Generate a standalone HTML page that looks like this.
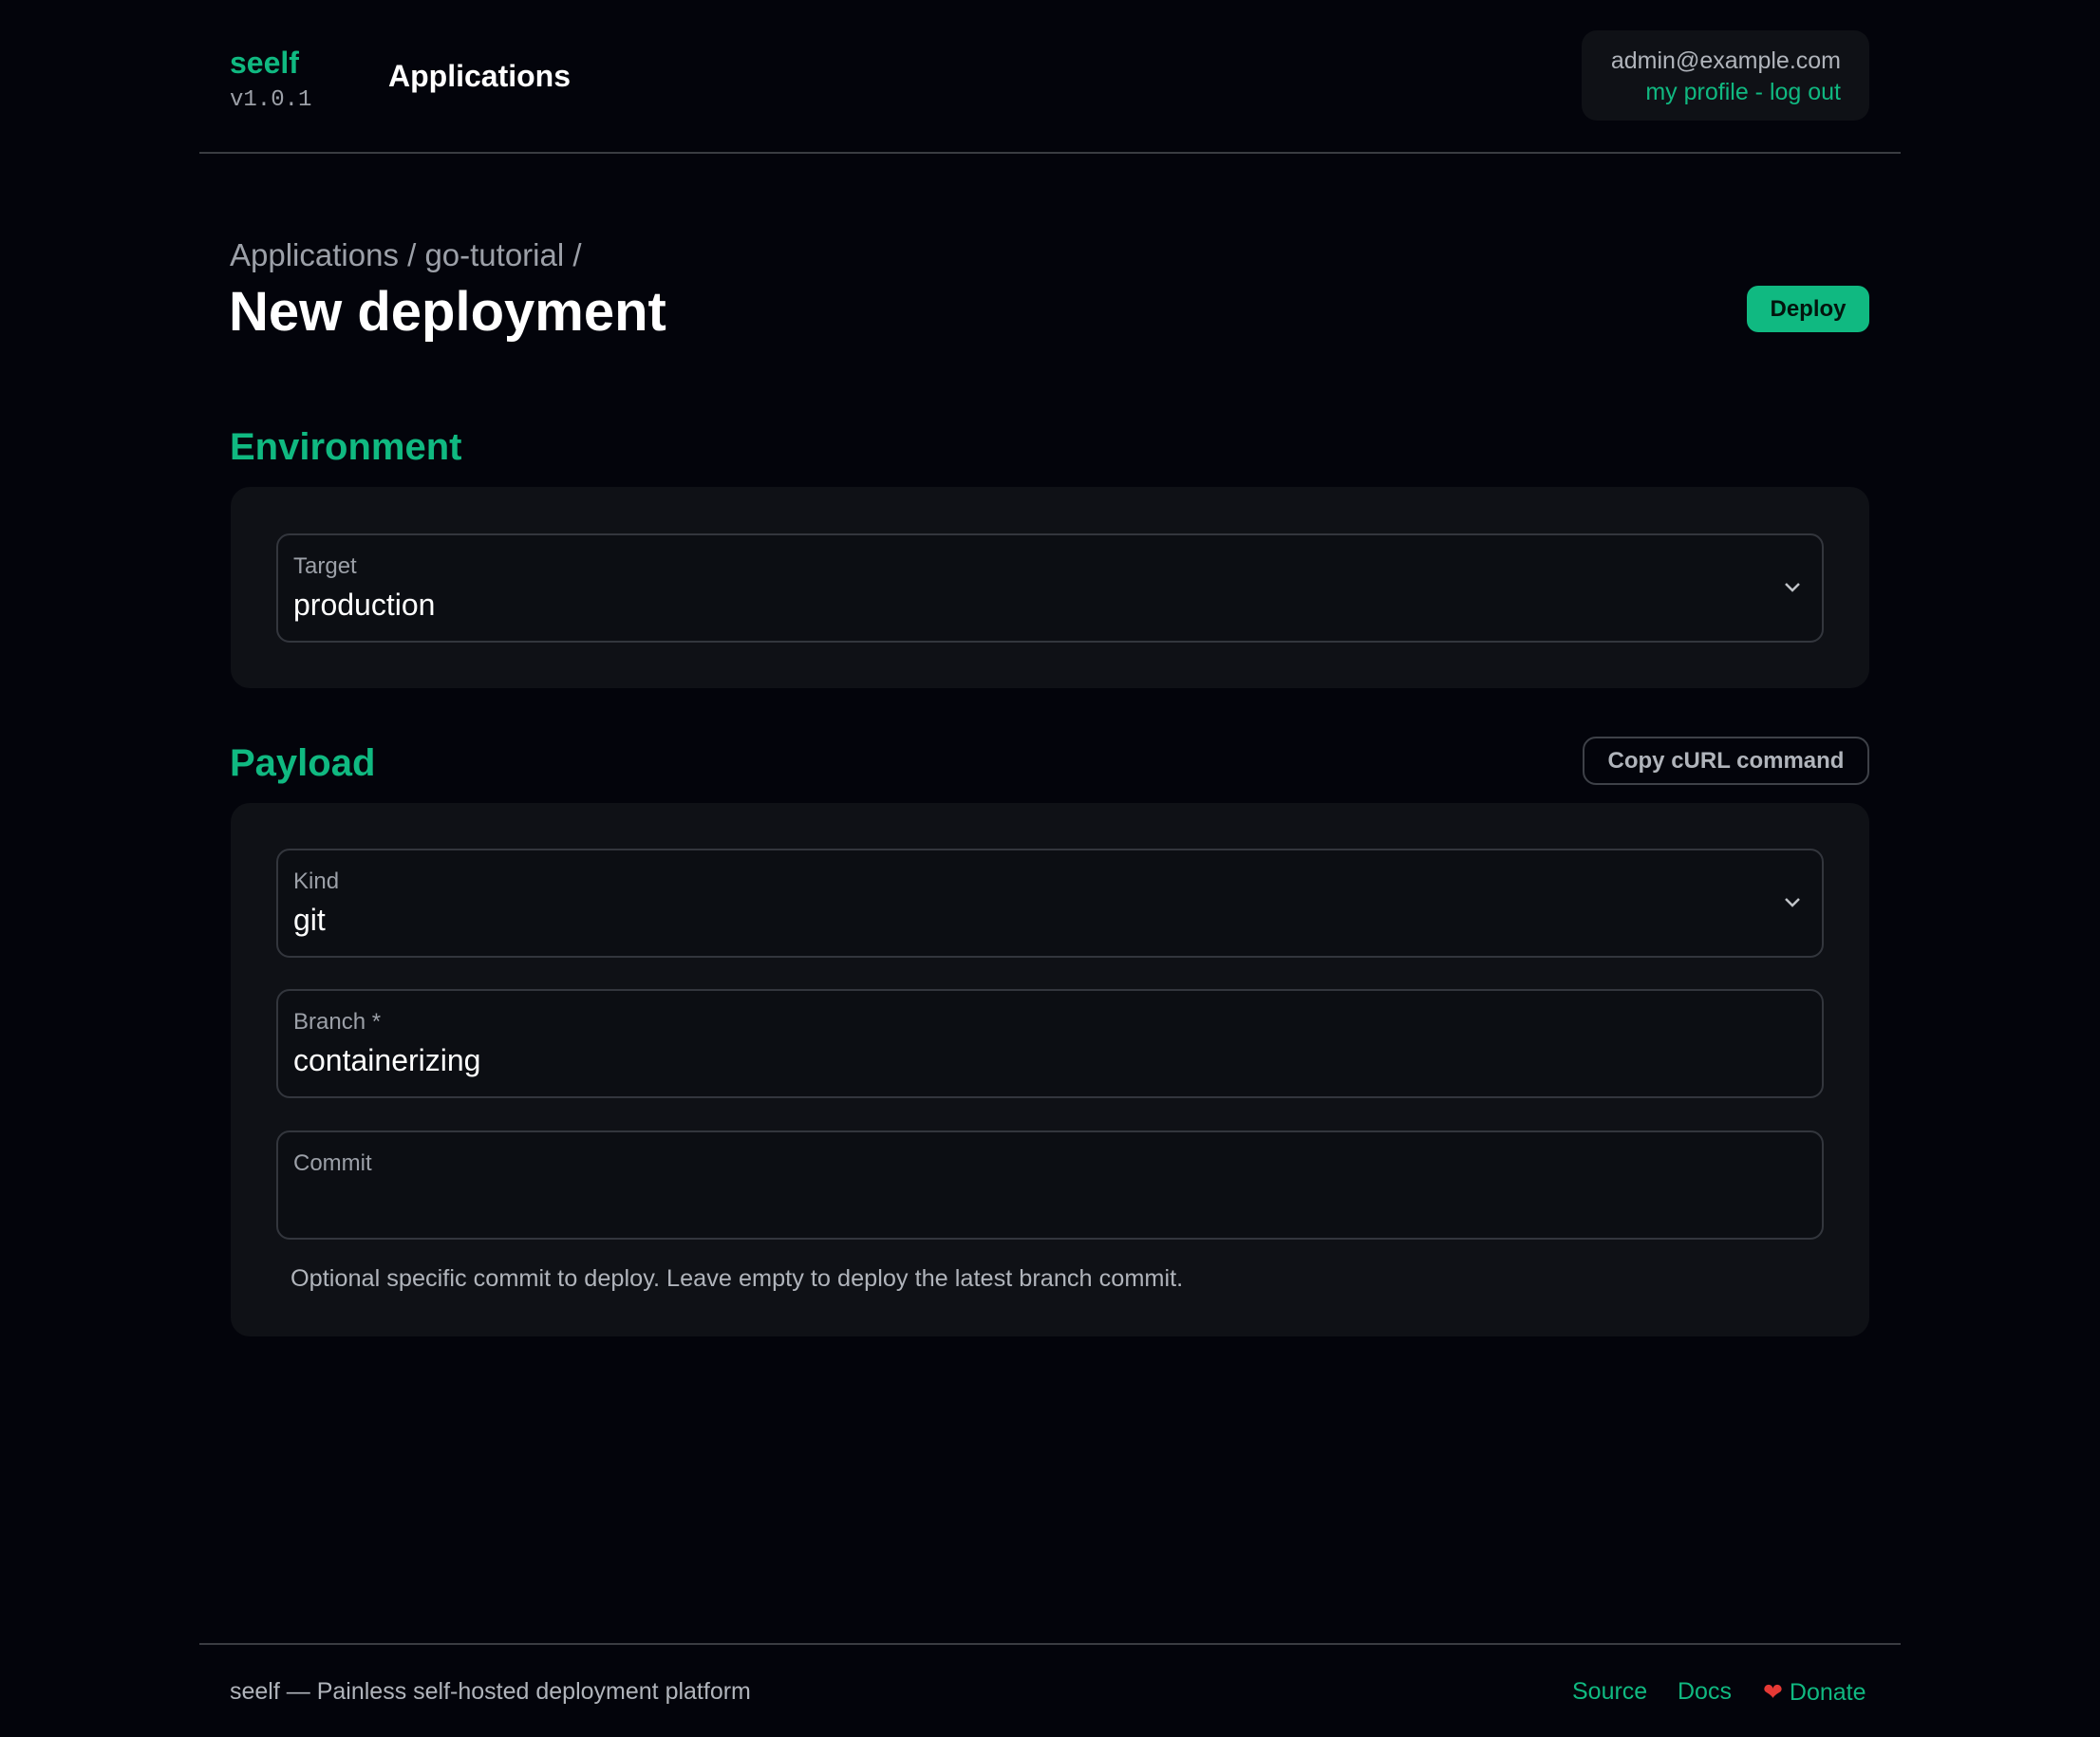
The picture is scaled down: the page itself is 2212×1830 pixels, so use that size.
<!DOCTYPE html>
<html><head><meta charset="utf-8"><style>
*{margin:0;padding:0;box-sizing:border-box}
body{width:2212px;height:1830px;background:#03040b;font-family:"Liberation Sans",sans-serif;position:relative;overflow:hidden;color:#fff}
.a{position:absolute;white-space:nowrap}
.g{color:#10b981}
.line{position:absolute;left:210px;width:1792px;height:2px;background:#3a3c42}
.card{position:absolute;left:243px;width:1726px;background:#0f1116;border-radius:20px}
.f{position:absolute;left:48px;width:1630px;height:115px;border:2px solid #33363d;border-radius:14px;background:#0c0e13}
.f .l{position:absolute;left:16px;top:19px;font-size:24px;color:#9ca0a8}
.f .v{position:absolute;left:16px;top:55px;font-size:32px;color:#fff}
.f svg{position:absolute;right:22px;top:48px}
</style></head><body>
<div class="a g" style="left:242px;top:48px;font-size:32px;font-weight:bold">seelf</div>
<div class="a" style="left:242px;top:92px;font-size:24px;font-family:'Liberation Mono',monospace;color:#9ca0a8">v1.0.1</div>
<div class="a" style="left:409px;top:62px;font-size:32px;font-weight:bold">Applications</div>
<div class="a" style="left:1666px;top:32px;width:303px;height:95px;background:#0f1116;border-radius:16px"></div>
<div class="a" style="left:1666px;top:50px;width:273px;text-align:right;font-size:25px;color:#b0b4bb">admin@example.com</div>
<div class="a g" style="left:1666px;top:83px;width:273px;text-align:right;font-size:25px">my profile - log out</div>
<div class="line" style="top:160px"></div>
<div class="a" style="left:242px;top:250px;font-size:33px;color:#9ca0a8">Applications / go-tutorial /</div>
<div class="a" style="left:241px;top:295px;font-size:58px;font-weight:bold">New deployment</div>
<div class="a" style="left:1840px;top:301px;width:129px;height:49px;background:#10b981;border-radius:12px;color:#03140d;font-size:24px;font-weight:bold;text-align:center;line-height:49px">Deploy</div>
<div class="a g" style="left:242px;top:449px;font-size:40px;font-weight:bold">Environment</div>
<div class="card" style="top:513px;height:212px">
<div class="f" style="top:49px"><div class="l">Target</div><div class="v">production</div><svg width="18" height="12" viewBox="0 0 18 12"><path d="M2 3l7 7 7-7" stroke="#c0c3c8" stroke-width="2.5" fill="none"/></svg></div>
</div>
<div class="a g" style="left:242px;top:782px;font-size:40px;font-weight:bold">Payload</div>
<div class="a" style="left:1667px;top:776px;width:302px;height:51px;border:2px solid #3e4148;border-radius:14px;color:#b0b4bb;font-size:24px;font-weight:bold;text-align:center;line-height:48px">Copy cURL command</div>
<div class="card" style="top:846px;height:562px">
<div class="f" style="top:48px"><div class="l">Kind</div><div class="v">git</div><svg width="18" height="12" viewBox="0 0 18 12"><path d="M2 3l7 7 7-7" stroke="#c0c3c8" stroke-width="2.5" fill="none"/></svg></div>
<div class="f" style="top:196px"><div class="l">Branch *</div><div class="v">containerizing</div></div>
<div class="f" style="top:345px"><div class="l">Commit</div></div>
<div class="a" style="left:63px;top:487px;font-size:25.3px;color:#b0b4bb">Optional specific commit to deploy. Leave empty to deploy the latest branch commit.</div>
</div>
<div class="line" style="top:1731px"></div>
<div class="a" style="left:242px;top:1768px;font-size:25px;color:#b0b4bb">seelf — Painless self-hosted deployment platform</div>
<div class="a g" style="left:1656px;top:1768px;font-size:25px">Source</div>
<div class="a g" style="left:1767px;top:1768px;font-size:25px">Docs</div>
<div class="a g" style="left:1857px;top:1768px;font-size:25px"><span style="color:#e53935">❤</span> Donate</div>
</body></html>
